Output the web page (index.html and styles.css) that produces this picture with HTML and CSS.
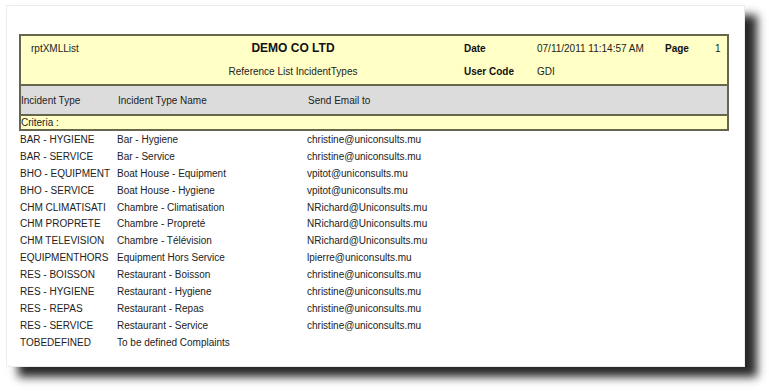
FILE: index.html
```html
<!DOCTYPE html>
<html lang="en">
<head>
<meta charset="utf-8">
<title>rptXMLList - Reference List IncidentTypes</title>
<link rel="stylesheet" href="styles.css">
</head>
<body>
<div class="sheet">
  <div class="report-box">
    <div class="report-head">
      <div class="rpt-name">rptXMLList</div>
      <div class="company">DEMO CO LTD</div>
      <div class="lbl lbl-date">Date</div>
      <div class="val val-date">07/11/2011 11:14:57 AM</div>
      <div class="lbl lbl-page">Page</div>
      <div class="val val-page">1</div>
      <div class="title">Reference List IncidentTypes</div>
      <div class="lbl lbl-user">User Code</div>
      <div class="val val-user">GDI</div>
    </div>
    <div class="col-head cols">
      <div>Incident Type</div>
      <div>Incident Type Name</div>
      <div>Send Email to</div>
    </div>
    <div class="criteria">Criteria :</div>
  </div>

  <div class="rows">
    <div class="cols row"><div>BAR - HYGIENE</div><div>Bar - Hygiene</div><div>christine@uniconsults.mu</div></div>
    <div class="cols row"><div>BAR - SERVICE</div><div>Bar - Service</div><div>christine@uniconsults.mu</div></div>
    <div class="cols row"><div>BHO - EQUIPMENT</div><div>Boat House - Equipment</div><div>vpitot@uniconsults.mu</div></div>
    <div class="cols row"><div>BHO - SERVICE</div><div>Boat House - Hygiene</div><div>vpitot@uniconsults.mu</div></div>
    <div class="cols row"><div>CHM CLIMATISATI</div><div>Chambre - Climatisation</div><div>NRichard@Uniconsults.mu</div></div>
    <div class="cols row"><div>CHM PROPRETE</div><div>Chambre - Propreté</div><div>NRichard@Uniconsults.mu</div></div>
    <div class="cols row"><div>CHM TELEVISION</div><div>Chambre - Télévision</div><div>NRichard@Uniconsults.mu</div></div>
    <div class="cols row"><div>EQUIPMENTHORS</div><div>Equipment Hors Service</div><div>lpierre@uniconsults.mu</div></div>
    <div class="cols row"><div>RES - BOISSON</div><div>Restaurant - Boisson</div><div>christine@uniconsults.mu</div></div>
    <div class="cols row"><div>RES - HYGIENE</div><div>Restaurant - Hygiene</div><div>christine@uniconsults.mu</div></div>
    <div class="cols row"><div>RES - REPAS</div><div>Restaurant - Repas</div><div>christine@uniconsults.mu</div></div>
    <div class="cols row"><div>RES - SERVICE</div><div>Restaurant - Service</div><div>christine@uniconsults.mu</div></div>
    <div class="cols row"><div>TOBEDEFINED</div><div>To be defined Complaints</div><div></div></div>
  </div>
</div>
</body>
</html>
```

FILE: styles.css
```css
html, body {
  margin: 0;
  padding: 0;
  background: #ffffff;
}

body {
  box-sizing: border-box;
  min-height: 391px;
  font-family: "Liberation Sans", Arial, sans-serif;
  font-size: 10px;
  color: #222222;
  padding: 5px 0 0 6px;
}

/* the printed page with its drop shadow */
.sheet {
  box-sizing: border-box;
  width: 739px;
  height: 362px;
  background: #ffffff;
  border: 1px solid #ececec;
  box-shadow: 12px 10px 9px rgba(40, 40, 40, 1);
  padding: 28px 0 0 12px;
}

.report-box {
  width: 710px;
  box-sizing: border-box;
  border: 2px solid #66664f;
  background: #ffffc6;
}

/* title block */
.report-head {
  display: grid;
  grid-template-columns: 160px 224px 59px 73px 128px 50px 1fr;
  grid-template-rows: 24px 23px;
  align-items: center;
  padding-bottom: 1px;
  border-bottom: 2px solid #66664f;
}

.rpt-name { grid-column: 1; grid-row: 1; padding-left: 10px; }
.company {
  grid-column: 2; grid-row: 1;
  text-align: center;
  font-weight: bold;
  font-size: 12px;
  color: #111111;
}
.title { grid-column: 2; grid-row: 2; text-align: center; }
.lbl { font-weight: bold; color: #111111; }
.lbl-date { grid-column: 4; grid-row: 1; }
.val-date { grid-column: 5; grid-row: 1; }
.lbl-page { grid-column: 6; grid-row: 1; }
.val-page { grid-column: 7; grid-row: 1; }
.lbl-user { grid-column: 4; grid-row: 2; }
.val-user { grid-column: 5; grid-row: 2; }

/* shared three-column layout */
.cols {
  display: grid;
  grid-template-columns: 97px 190px 1fr;
  align-items: center;
}

.col-head {
  height: 28px;
  background: #dcdcdc;
  border-bottom: 2px solid #66664f;
}

.criteria {
  height: 13px;
  line-height: 13px;
}

.rows {
  padding: 0 0 0 1px;
}

.row {
  height: 16.9px;
}
```
